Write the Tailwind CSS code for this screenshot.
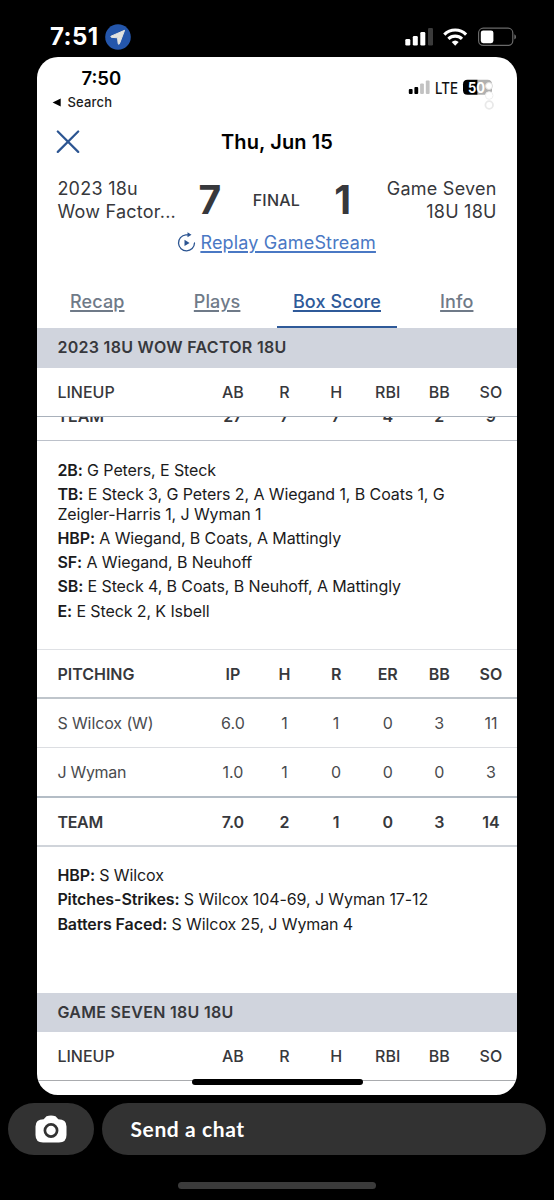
<!DOCTYPE html>
<html lang="en">
  <head>
    <meta charset="UTF-8" />
    <meta name="viewport" content="width=device-width, initial-scale=1.0" />
    <title>Box Score</title>
    <script src="https://cdn.jsdelivr.net/npm/@tailwindcss/browser@4"></script>
  </head>
  <body class="h-[1200px] w-[554px] overflow-hidden bg-black font-['Inter',sans-serif] text-[#37383c]">
    <!-- Phone status bar -->
    <div class="flex h-[57px] items-start pt-[21px] pr-[37px] pl-[50px]">
      <span class="w-[55px] text-[24px] leading-8 font-bold tracking-[0.4px] whitespace-nowrap text-white">7:51</span>
      <svg class="mt-[3px] h-[26px] w-[26px]" viewBox="0 0 26 26">
        <circle cx="13" cy="13" r="12.8" fill="#2456ab" />
        <path d="M19.6 6.3 6 12.2q-.6.7.3 1.1l6.2.5.7 6q.5 1 1.2.1z" fill="#e2e2df" stroke="#e2e2df" stroke-linejoin="round" />
      </svg>
      <svg class="mt-[6px] ml-auto h-[20px] w-[115px]" viewBox="402 27 115 20">
        <rect x="405.3" y="39" width="5" height="6.6" rx="1.3" fill="#fff" />
        <rect x="412.8" y="36" width="5" height="9.6" rx="1.3" fill="#fff" />
        <rect x="420.3" y="32" width="5" height="13.6" rx="1.3" fill="#fff" />
        <rect x="428" y="28" width="5" height="17.6" rx="1.3" fill="#3b3b3b" />
        <g fill="none" stroke="#fff" stroke-width="3.1">
          <path d="M444.3 34.6a15.3 15.3 0 0 1 21.8 0" />
          <path d="M448.4 38.9a9.6 9.6 0 0 1 13.6 0" />
        </g>
        <path d="M451.7 42a5.2 5.2 0 0 1 7 0l-3.5 3.7z" fill="#fff" />
        <rect x="478.6" y="28.2" width="34.2" height="17.2" rx="4.7" fill="none" stroke="#6a6a6a" stroke-width="1.2" />
        <rect x="480.8" y="30.4" width="12.6" height="12.8" rx="2.4" fill="#fff" />
        <path d="M514.3 34.3q1.8.9 1.8 2.6t-1.8 2.6z" fill="#6a6a6a" />
      </svg>
    </div>

    <!-- Shared screen -->
    <div class="relative ml-[37.4px] h-[1037.5px] w-[479.3px] overflow-hidden rounded-[21px] bg-white">
      <div class="flex h-[57px] justify-between pr-[23px] pl-[15px]">
        <div>
          <div class="pt-[8px] pl-[29px] text-[18.5px] leading-[27px] font-semibold text-black">7:50</div>
          <div class="flex items-center gap-[6px] text-[13px] leading-[21px] font-medium tracking-[0.2px] text-[#1c1c1c]">
            <svg class="h-[9px] w-[9px]" viewBox="0 0 9 9"><path d="M.6 4.5 8.7.5v8z" fill="#000" /></svg>
            Search
          </div>
        </div>
        <svg class="mt-[19px] h-[36px] w-[88px]" viewBox="406 76 88 36">
          <rect x="408.8" y="89" width="3.8" height="5" rx="1" fill="#000" />
          <rect x="414.4" y="87" width="3.8" height="7" rx="1" fill="#000" />
          <rect x="420.1" y="83.6" width="3.8" height="10.4" rx="1" fill="#c2c2c2" />
          <rect x="425.8" y="80.5" width="3.8" height="13.5" rx="1" fill="#c2c2c2" />
          <text x="435" y="93.7" font-size="15.5" font-weight="500" textLength="23" lengthAdjust="spacingAndGlyphs" fill="#111">LTE</text>
          <path d="M477.5 79.7h10q4.5 0 4.5 4.5v6q0 4.5-4.5 4.5h-10z" fill="#b0b0b0" />
          <path d="M477.5 79.7h-10q-4.500 0-4.500 4.500v6q0 4.500 4.500 4.500h10z" fill="#000" />
          <text x="468" y="92.500" font-size="14" font-weight="700" textLength="17" lengthAdjust="spacingAndGlyphs" fill="#fff">50</text>
          <circle cx="489" cy="86" r="3.500" fill="#fff" stroke="#ddd" />
          <circle cx="489.200" cy="95.500" r="3.800" fill="#fff" stroke="#eee" />
          <circle cx="489.200" cy="105" r="3.800" fill="#fff" stroke="#e9e9e9" stroke-width="1.800" />
        </svg>
      </div>

      <div class="relative flex h-[56px] items-center justify-center">
        <svg class="absolute top-[16px] left-[19px] h-[24px] w-[24px]" viewBox="0 0 24 24">
          <path d="m1.800 1.500 20.400 20.400M22.200 1.500 1.800 21.900" stroke="#2c5592" stroke-width="2.200" stroke-linecap="round" />
        </svg>
        <h1 class="text-[20px] font-semibold tracking-[0.1px] text-black">Thu, Jun 15</h1>
      </div>

      <!-- Score -->
      <div class="flex h-[60px] pt-[7px] text-[18px] leading-[23px] tracking-[0.25px]">
        <div class="w-[139px] pl-5 whitespace-nowrap">2023 18u<br />Wow Factor...</div>
        <div class="w-[67px] text-center text-[39px] leading-[46px] font-bold">7</div>
        <div class="w-[66px] pt-[11px] text-center text-[16px] leading-[24px] font-medium">FINAL</div>
        <div class="w-[67px] text-center text-[39px] leading-[46px] font-bold">1</div>
        <div class="flex-1 pr-[20px] text-right whitespace-nowrap">Game Seven<br />18U 18U</div>
      </div>
      <div class="flex h-[46px] gap-[4px] pt-[1px] pl-[140px]">
        <svg class="mt-[1px] h-[20px] w-[19px]" viewBox="0 0 19 20">
          <path d="M11.200 2.900H8.800A8 8 0 1 0 17.500 11" fill="none" stroke="#2c5592" stroke-width="1.300" stroke-linecap="round" />
          <path d="M10.500.3v5l4-2.500zM7.500 7.800v6.200l5.100-3.100z" fill="#2c5592" />
        </svg>
        <a class="text-[18px] leading-[24px] tracking-[0.18px] whitespace-nowrap text-[#4a78c4] underline decoration-[1.500px] underline-offset-[2px]">Replay GameStream</a>
      </div>

      <!-- Tabs -->
      <div class="grid h-[52px] grid-cols-4 text-center text-[18px] leading-[52px] font-medium tracking-[0.1px] text-[#6f7a88]">
        <a class="underline decoration-[1.500px] underline-offset-[2px]">Recap</a>
        <a class="underline decoration-[1.500px] underline-offset-[2px]">Plays</a>
        <a class="h-[52px] border-b-2 border-[#2f5a99] text-[#2f5a99] underline decoration-[1.500px] underline-offset-[2px]">Box Score</a>
        <a class="underline decoration-[1.500px] underline-offset-[2px]">Info</a>
      </div>

      <!-- Batting -->
      <h2 class="flex h-[40px] items-center bg-[#d0d4dd] pb-[2px] pl-5 text-[16px] font-semibold tracking-[0.3px]">2023 18U WOW FACTOR 18U</h2>
      <div class="grid h-[49px] grid-cols-[1fr_repeat(6,51.600px)] items-center border-b-[1.500px] border-[#a9b1bb] pl-5 text-center text-[16px] font-medium">
        <span class="text-left">LINEUP</span><span>AB</span><span>R</span><span>H</span><span>RBI</span><span>BB</span><span>SO</span>
      </div>
      <!-- Totals row scrolled halfway under the sticky header -->
      <div class="flex h-[24px] flex-col justify-end overflow-hidden border-b border-[#bcc1ca]">
        <div class="grid h-[49px] shrink-0 grid-cols-[1fr_repeat(6,51.600px)] items-center pl-5 text-center text-[16px] font-semibold">
          <span class="text-left">TEAM</span><span>27</span><span>7</span><span>7</span><span>4</span><span>2</span><span>9</span>
        </div>
      </div>
      <div class="h-[208px] space-y-[5px] pt-[20px] pl-5 text-[16px] leading-[19.300px] tracking-[-0.1px] text-[#1b1b1c]">
        <p><b class="font-semibold">2B:</b> G Peters, E Steck</p>
        <p><b class="font-semibold">TB:</b> E Steck 3, G Peters 2, A Wiegand 1, B Coats 1, G<br />Zeigler-Harris 1, J Wyman 1</p>
        <p><b class="font-semibold">HBP:</b> A Wiegand, B Coats, A Mattingly</p>
        <p><b class="font-semibold">SF:</b> A Wiegand, B Neuhoff</p>
        <p><b class="font-semibold">SB:</b> E Steck 4, B Coats, B Neuhoff, A Mattingly</p>
        <p><b class="font-semibold">E:</b> E Steck 2, K Isbell</p>
      </div>

      <!-- Pitching -->
      <div class="grid h-[50px] grid-cols-[1fr_repeat(6,51.600px)] items-center border-t border-b-2 border-t-[#dfe1e5] border-b-[#bfc5cb] pl-5 text-center text-[16px] font-semibold">
        <span class="text-left">PITCHING</span><span>IP</span><span>H</span><span>R</span><span>ER</span><span>BB</span><span>SO</span>
      </div>
      <div class="grid h-[49px] grid-cols-[1fr_repeat(6,51.600px)] items-center border-b border-[#dcdee2] pl-5 text-center text-[16px] text-[#4a4b4e]">
        <span class="text-left tracking-[-0.1px]">S Wilcox (W)</span><span>6.0</span><span>1</span><span>1</span><span>0</span><span>3</span><span>11</span>
      </div>
      <div class="grid h-[50px] grid-cols-[1fr_repeat(6,51.600px)] items-center border-b-2 border-[#b4bdc6] pl-5 text-center text-[16px] text-[#4a4b4e]">
        <span class="text-left tracking-[-0.3px]">J Wyman</span><span>1.0</span><span>1</span><span>0</span><span>0</span><span>0</span><span>3</span>
      </div>
      <div class="grid h-[49px] grid-cols-[1fr_repeat(6,51.600px)] items-center border-b-2 border-[#d0d4da] pl-5 text-center text-[16px] font-semibold">
        <span class="text-left tracking-[-0.3px]">TEAM</span><span>7.0</span><span>2</span><span>1</span><span>0</span><span>3</span><span>14</span>
      </div>
      <div class="h-[146px] space-y-[5px] pt-[19px] pl-5 text-[16px] leading-[19.300px] tracking-[-0.1px] text-[#1b1b1c]">
        <p><b class="font-semibold">HBP:</b> S Wilcox</p>
        <p><b class="font-semibold">Pitches-Strikes:</b> S Wilcox 104-69, J Wyman 17-12</p>
        <p><b class="font-semibold">Batters Faced:</b> S Wilcox 25, J Wyman 4</p>
      </div>

      <!-- Opponent -->
      <h2 class="flex h-[39px] items-center bg-[#d0d4dd] pb-[2px] pl-5 text-[16px] font-semibold tracking-[0.3px]">GAME SEVEN 18U 18U</h2>
      <div class="grid h-[49px] grid-cols-[1fr_repeat(6,51.600px)] items-center border-b border-[#a9abae] pl-5 text-center text-[16px] font-medium">
        <span class="text-left">LINEUP</span><span>AB</span><span>R</span><span>H</span><span>RBI</span><span>BB</span><span>SO</span>
      </div>
      <div class="absolute bottom-[10px] left-[154.500px] h-[6px] w-[171px] rounded-full bg-black"></div>
    </div>

    <!-- Chat bar -->
    <div class="mt-[8.500px] flex h-[52px] gap-[7.500px] px-2">
      <button class="flex w-[86px] items-center justify-center rounded-full bg-[#323232]">
        <svg class="h-[28px] w-[32px]" viewBox="0 0 32 28">
          <path d="M11.500 1.200Q16-.3 20.500 1.200L23.300 4.300Q31.500 4.300 31.500 11.500V20Q31.500 27.500 24 27.500H8Q.5 27.500.5 20V11.500Q.5 4.300 8.700 4.300z" fill="#fff" />
          <circle cx="16" cy="15.500" r="6.100" fill="#fff" stroke="#323232" stroke-width="2.700" />
        </svg>
      </button>
      <div class="flex flex-1 items-center rounded-full bg-[#323232] pl-[29px] font-['Lato',sans-serif] text-[21px] font-bold tracking-[0.6px] text-white">Send a chat</div>
    </div>
    <div class="mx-auto mt-[27px] h-[7px] w-[198px] rounded-full bg-[#3b3b3b]"></div>
  </body>
</html>
